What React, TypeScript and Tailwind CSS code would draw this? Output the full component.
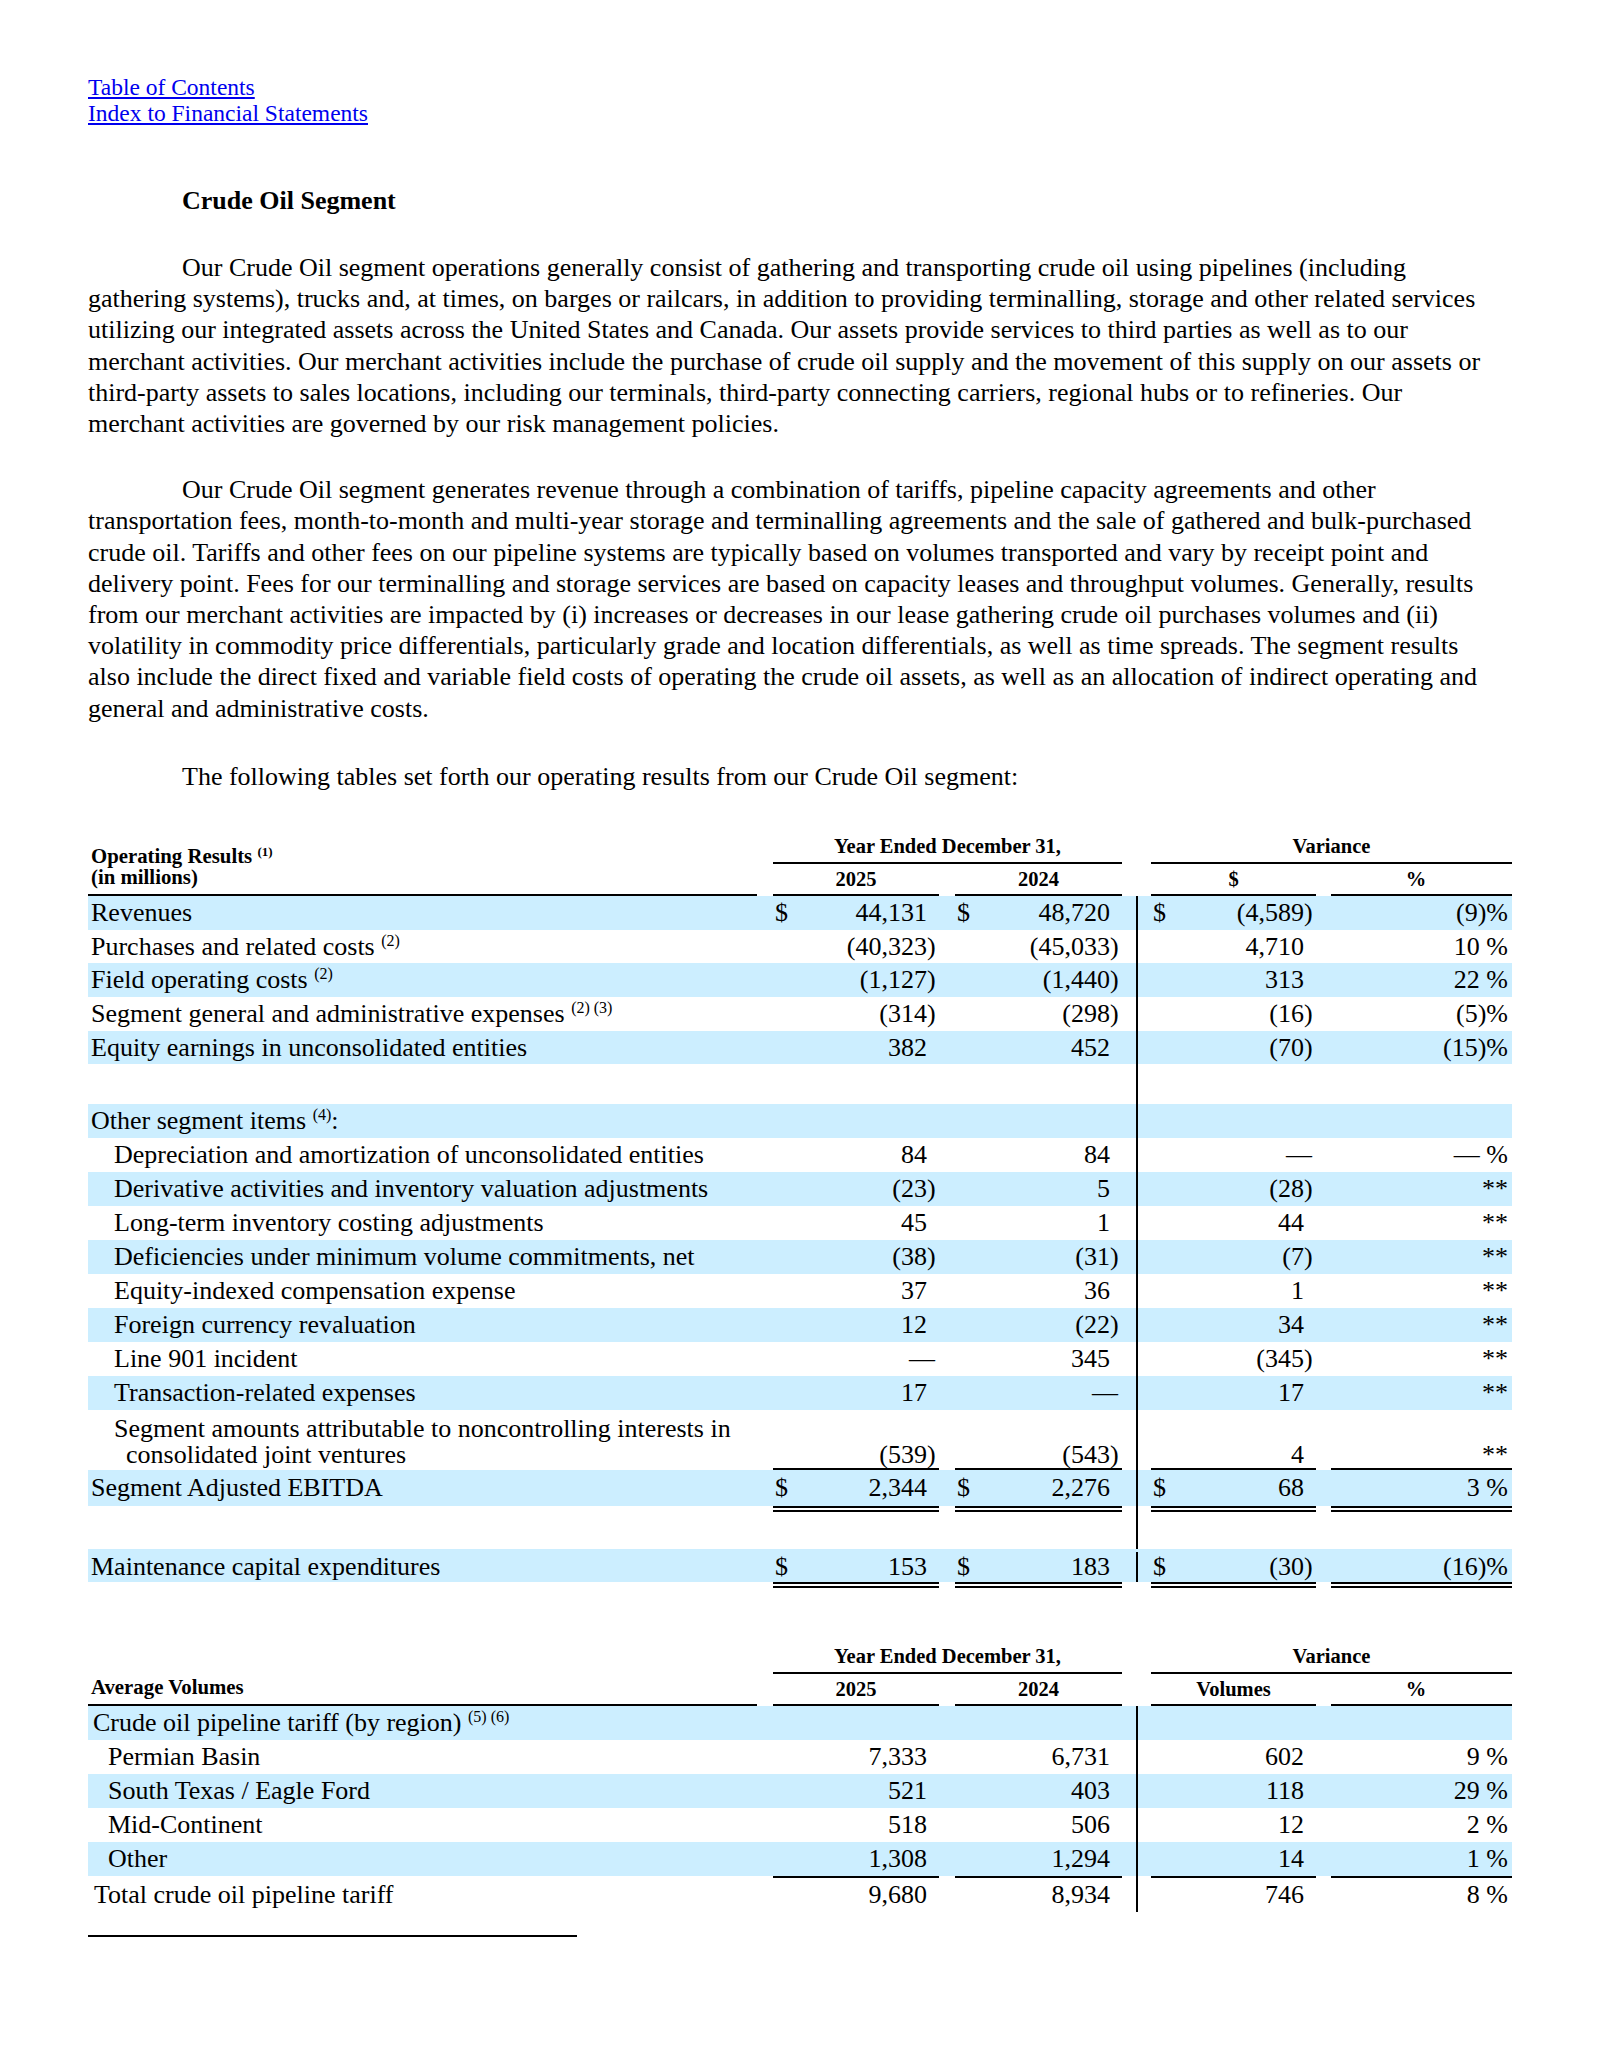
import React from "react";

type V = { s?: boolean; v?: string };

const BLUE = "bg-[#cceeff]";

function VSep({ on = true }: { on?: boolean }) {
  return (
    <div className="w-[29px] shrink-0 self-stretch flex justify-center">
      {on && <div className="w-[2px] bg-black" />}
    </div>
  );
}

function Num({ w, s, v }: { w: string } & V) {
  const paren = !!v && v.endsWith(")");
  const dash = v === "—";
  return (
    <div className={`${w} shrink-0 flex pl-[2px] pr-[4px] whitespace-nowrap`}>
      <span className="w-[14px] shrink-0">{s ? "$" : ""}</span>
      <span className="flex-1 text-right">{paren ? v!.slice(0, -1) : v}</span>
      {!dash && <span className="w-[8px] shrink-0">{paren ? ")" : ""}</span>}
    </div>
  );
}

type RowProps = {
  label?: React.ReactNode;
  vals?: [V?, V?, V?, string?];
  blue?: boolean;
  h: string;
  pl?: string;
  end?: boolean;
  cls?: string;
};

function Row({ label, vals = [], blue, h, pl = "pl-[3px]", end, cls = "" }: RowProps) {
  const [a, b, c, d] = vals;
  return (
    <div className={`flex ${h} ${end ? "items-end" : "items-center"} ${blue ? BLUE : ""} ${cls}`}>
      <div className={`w-[685px] shrink-0 whitespace-nowrap ${pl}`}>{label}</div>
      <Num w="w-[166px]" {...a} />
      <div className="w-[16px] shrink-0" />
      <Num w="w-[167px]" {...b} />
      <VSep />
      <Num w="w-[165px]" {...c} />
      <div className="w-[15px] shrink-0" />
      <div className="w-[181px] shrink-0 pr-[4px] text-right whitespace-nowrap">{d}</div>
    </div>
  );
}

function Rule({ double, vline = true }: { double?: boolean; vline?: boolean }) {
  const line = double ? "border-t-[6px] border-double border-black" : "bg-black";
  return (
    <div className={`flex ${double ? "h-[6px]" : "h-[2px]"}`}>
      <div className="w-[685px] shrink-0" />
      <div className={`w-[166px] shrink-0 ${line}`} />
      <div className="w-[16px] shrink-0" />
      <div className={`w-[167px] shrink-0 ${line}`} />
      <VSep on={vline} />
      <div className={`w-[165px] shrink-0 ${line}`} />
      <div className="w-[15px] shrink-0" />
      <div className={`w-[181px] shrink-0 ${line}`} />
    </div>
  );
}

function Head({ label, dollar }: { label: React.ReactNode; dollar: string }) {
  return (
    <div className="flex font-bold text-[20.5px]">
      <div className="w-[669px] shrink-0 flex flex-col justify-end border-b-2 border-black pb-[7px] pl-[3px] text-[20.8px] leading-[21px]">
        {label}
      </div>
      <div className="w-[16px] shrink-0" />
      <div className="flex flex-col">
        <div className="flex h-[32px] items-center leading-[24px]">
          <div className="w-[349px] text-center">Year Ended December 31,</div>
          <div className="w-[29px]" />
          <div className="w-[361px] text-center">Variance</div>
        </div>
        <div className="flex h-[2px]">
          <div className="w-[349px] bg-black" />
          <div className="w-[29px]" />
          <div className="w-[361px] bg-black" />
        </div>
        <div className="flex h-[30px] items-center leading-[24px]">
          <div className="w-[166px] text-center">2025</div>
          <div className="w-[16px]" />
          <div className="w-[167px] text-center">2024</div>
          <div className="w-[29px]" />
          <div className="w-[165px] text-center">{dollar}</div>
          <div className="w-[15px]" />
          <div className="w-[181px] text-center pr-[11px]">%</div>
        </div>
        <div className="flex h-[2px]">
          <div className="w-[166px] bg-black" />
          <div className="w-[16px]" />
          <div className="w-[167px] bg-black" />
          <div className="w-[29px]" />
          <div className="w-[165px] bg-black" />
          <div className="w-[15px]" />
          <div className="w-[181px] bg-black" />
        </div>
      </div>
    </div>
  );
}

function Sup({ children }: { children: React.ReactNode }) {
  return <span className="text-[16px] leading-none align-[9px]">{children}</span>;
}

const SUB = "pl-[26px]";

export default function App() {
  return (
    <div className="min-h-screen bg-white text-black font-['Liberation_Serif',serif]">
      <div className="mx-[88px] w-[1424px] pt-[74px] pb-[100px]">
        <div className="text-[23.5px] leading-[26px]">
          <a href="#" className="block w-fit text-[#0000ee] underline">Table of Contents</a>
          <a href="#" className="block w-fit text-[#0000ee] underline">Index to Financial Statements</a>
        </div>

        <h2 className="mt-[59px] pl-[94px] text-[26px] leading-[31px] font-bold">Crude Oil Segment</h2>

        <div className="text-[26px] leading-[31.2px] whitespace-nowrap">
          <p className="mt-[36px] indent-[94px]">
            Our Crude Oil segment operations generally consist of gathering and transporting crude oil using pipelines (including
            <br />
            gathering systems), trucks and, at times, on barges or railcars, in addition to providing terminalling, storage and other related services
            <br />
            utilizing our integrated assets across the United States and Canada. Our assets provide services to third parties as well as to our
            <br />
            merchant activities. Our merchant activities include the purchase of crude oil supply and the movement of this supply on our assets or
            <br />
            third-party assets to sales locations, including our terminals, third-party connecting carriers, regional hubs or to refineries. Our
            <br />
            merchant activities are governed by our risk management policies.
          </p>
          <p className="mt-[35px] indent-[94px]">
            Our Crude Oil segment generates revenue through a combination of tariffs, pipeline capacity agreements and other
            <br />
            transportation fees, month-to-month and multi-year storage and terminalling agreements and the sale of gathered and bulk-purchased
            <br />
            crude oil. Tariffs and other fees on our pipeline systems are typically based on volumes transported and vary by receipt point and
            <br />
            delivery point. Fees for our terminalling and storage services are based on capacity leases and throughput volumes. Generally, results
            <br />
            from our merchant activities are impacted by (i) increases or decreases in our lease gathering crude oil purchases volumes and (ii)
            <br />
            volatility in commodity price differentials, particularly grade and location differentials, as well as time spreads. The segment results
            <br />
            also include the direct fixed and variable field costs of operating the crude oil assets, as well as an allocation of indirect operating and
            <br />
            general and administrative costs.
          </p>
          <p className="mt-[37px] indent-[94px]">
            The following tables set forth our operating results from our Crude Oil segment:
          </p>
        </div>

        {/* operating results */}
        <div className="mt-[38px]">
          <Head
            dollar="$"
            label={
              <>
                <div>
                  Operating Results <span className="text-[13px] leading-none align-[7px]">(1)</span>
                </div>
                <div>(in millions)</div>
              </>
            }
          />
          <div className="text-[26px] leading-[30px]">
            <Row h="h-[33.7px]" blue label="Revenues" vals={[{ s: true, v: "44,131" }, { s: true, v: "48,720" }, { s: true, v: "(4,589)" }, "(9)%"]} />
            <Row h="h-[33.7px]" label={<>Purchases and related costs <Sup>(2)</Sup></>} vals={[{ v: "(40,323)" }, { v: "(45,033)" }, { v: "4,710" }, "10 %"]} />
            <Row h="h-[33.7px]" blue label={<>Field operating costs <Sup>(2)</Sup></>} vals={[{ v: "(1,127)" }, { v: "(1,440)" }, { v: "313" }, "22 %"]} />
            <Row h="h-[33.7px]" label={<>Segment general and administrative expenses <Sup>(2) (3)</Sup></>} vals={[{ v: "(314)" }, { v: "(298)" }, { v: "(16)" }, "(5)%"]} />
            <Row h="h-[33.7px]" blue label="Equity earnings in unconsolidated entities" vals={[{ v: "382" }, { v: "452" }, { v: "(70)" }, "(15)%"]} />
            <Row h="h-[39.5px]" />
            <Row h="h-[34px]" blue label={<>Other segment items <Sup>(4)</Sup>:</>} />
            <Row h="h-[34px]" pl={SUB} label="Depreciation and amortization of unconsolidated entities" vals={[{ v: "84" }, { v: "84" }, { v: "—" }, "— %"]} />
            <Row h="h-[34px]" pl={SUB} blue label="Derivative activities and inventory valuation adjustments" vals={[{ v: "(23)" }, { v: "5" }, { v: "(28)" }, "**"]} />
            <Row h="h-[34px]" pl={SUB} label="Long-term inventory costing adjustments" vals={[{ v: "45" }, { v: "1" }, { v: "44" }, "**"]} />
            <Row h="h-[34px]" pl={SUB} blue label="Deficiencies under minimum volume commitments, net" vals={[{ v: "(38)" }, { v: "(31)" }, { v: "(7)" }, "**"]} />
            <Row h="h-[34px]" pl={SUB} label="Equity-indexed compensation expense" vals={[{ v: "37" }, { v: "36" }, { v: "1" }, "**"]} />
            <Row h="h-[34px]" pl={SUB} blue label="Foreign currency revaluation" vals={[{ v: "12" }, { v: "(22)" }, { v: "34" }, "**"]} />
            <Row h="h-[34px]" pl={SUB} label="Line 901 incident" vals={[{ v: "—" }, { v: "345" }, { v: "(345)" }, "**"]} />
            <Row h="h-[34px]" pl={SUB} blue label="Transaction-related expenses" vals={[{ v: "17" }, { v: "—" }, { v: "17" }, "**"]} />
            <div className="leading-[26px]">
              <Row
                h="h-[58px]"
                end
                pl="pl-[38px] -indent-[12px]"
                label={
                  <>
                    Segment amounts attributable to noncontrolling interests in
                    <br />
                    consolidated joint ventures
                  </>
                }
                vals={[{ v: "(539)" }, { v: "(543)" }, { v: "4" }, "**"]}
              />
            </div>
            <Rule />
            <Row h="h-[36px]" blue label="Segment Adjusted EBITDA" vals={[{ s: true, v: "2,344" }, { s: true, v: "2,276" }, { s: true, v: "68" }, "3 %"]} />
            <Rule double />
            <Row h="h-[37px]" />
            <Row h="h-[33px]" cls="pt-[3px]" blue label="Maintenance capital expenditures" vals={[{ s: true, v: "153" }, { s: true, v: "183" }, { s: true, v: "(30)" }, "(16)%"]} />
            <Rule double vline={false} />
          </div>
        </div>

        {/* average volumes */}
        <div className="mt-[52px]">
          <Head dollar="Volumes" label={<div>Average Volumes</div>} />
          <div className="text-[26px] leading-[30px]">
            <Row h="h-[34px]" blue pl="pl-[5px]" label={<>Crude oil pipeline tariff (by region) <Sup>(5) (6)</Sup></>} />
            <Row h="h-[34px]" pl="pl-[20px]" label="Permian Basin" vals={[{ v: "7,333" }, { v: "6,731" }, { v: "602" }, "9 %"]} />
            <Row h="h-[34px]" pl="pl-[20px]" blue label="South Texas / Eagle Ford" vals={[{ v: "521" }, { v: "403" }, { v: "118" }, "29 %"]} />
            <Row h="h-[34px]" pl="pl-[20px]" label="Mid-Continent" vals={[{ v: "518" }, { v: "506" }, { v: "12" }, "2 %"]} />
            <Row h="h-[34px]" pl="pl-[20px]" blue label="Other" vals={[{ v: "1,308" }, { v: "1,294" }, { v: "14" }, "1 %"]} />
            <Rule />
            <Row h="h-[34px]" pl="pl-[6px]" label="Total crude oil pipeline tariff" vals={[{ v: "9,680" }, { v: "8,934" }, { v: "746" }, "8 %"]} />
          </div>
        </div>

        <div className="mt-[23px] h-[2px] w-[489px] bg-black" />
      </div>
    </div>
  );
}
